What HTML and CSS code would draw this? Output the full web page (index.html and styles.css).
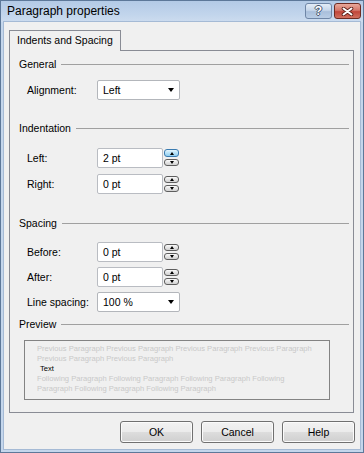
FILE: index.html
```html
<!DOCTYPE html>
<html lang="en">
<head>
    <meta charset="UTF-8">
    <title>Paragraph properties</title>
    <link rel="stylesheet" href="styles.css">
</head>
<body>
<div class="window">
    <div class="titlebar">
        <span class="title">Paragraph properties</span>
        <div class="caption-buttons">
            <span class="caption-btn help-btn">?</span>
            <span class="caption-btn close-btn">
                <svg width="13" height="9" viewBox="0 0 13 9">
                    <path d="M2.5 1.5 L10.5 7.5 M10.5 1.5 L2.5 7.5" stroke="#5a2018" stroke-width="3.6" stroke-linecap="round"/>
                    <path d="M2.5 1.5 L10.5 7.5 M10.5 1.5 L2.5 7.5" stroke="#fff" stroke-width="2" stroke-linecap="round"/>
                </svg>
            </span>
        </div>
    </div>

    <div class="client">
        <div class="tabs">
            <div class="tab active">Indents and Spacing</div>
        </div>

        <div class="tab-page">
            <div class="group-head"><span>General</span><span class="rule"></span></div>
            <div class="row row-alignment">
                <span class="label">Alignment:</span>
                <div class="combo"><span>Left</span><span class="combo-arrow"></span></div>
            </div>

            <div class="group-head head-indent"><span>Indentation</span><span class="rule"></span></div>
            <div class="row row-left">
                <span class="label">Left:</span>
                <div class="textbox">2 pt</div>
                <div class="spin">
                    <span class="spin-btn hover"><span class="tri-up"></span></span>
                    <span class="spin-btn"><span class="tri-down"></span></span>
                </div>
            </div>
            <div class="row row-next">
                <span class="label">Right:</span>
                <div class="textbox">0 pt</div>
                <div class="spin">
                    <span class="spin-btn"><span class="tri-up"></span></span>
                    <span class="spin-btn"><span class="tri-down"></span></span>
                </div>
            </div>

            <div class="group-head head-spacing"><span>Spacing</span><span class="rule"></span></div>
            <div class="row row-before">
                <span class="label">Before:</span>
                <div class="textbox">0 pt</div>
                <div class="spin">
                    <span class="spin-btn"><span class="tri-up"></span></span>
                    <span class="spin-btn"><span class="tri-down"></span></span>
                </div>
            </div>
            <div class="row row-tight">
                <span class="label">After:</span>
                <div class="textbox">0 pt</div>
                <div class="spin">
                    <span class="spin-btn"><span class="tri-up"></span></span>
                    <span class="spin-btn"><span class="tri-down"></span></span>
                </div>
            </div>
            <div class="row row-tight">
                <span class="label">Line spacing:</span>
                <div class="combo"><span>100 %</span><span class="combo-arrow"></span></div>
            </div>

            <div class="group-head head-preview"><span>Preview</span><span class="rule"></span></div>
            <div class="preview">
                <div class="preview-text">
                    <div>Previous Paragraph Previous Paragraph Previous Paragraph Previous Paragraph Previous Paragraph Previous Paragraph</div>
                    <div class="current">Text</div>
                    <div>Following Paragraph Following Paragraph Following Paragraph Following Paragraph Following Paragraph Following Paragraph</div>
                </div>
            </div>
        </div>

        <div class="dialog-buttons">
            <button class="btn">OK</button>
            <button class="btn">Cancel</button>
            <button class="btn">Help</button>
        </div>
    </div>
</div>
</body>
</html>
```

FILE: styles.css
```css
* {
    box-sizing: border-box;
}
body {
    margin: 0;
    font-family: "Liberation Sans", Arial, sans-serif;
    font-size: 10.5px;
    color: #000;
}
.window {
    width: 364px;
    height: 453px;
    border: 1px solid #5d7899;
    background: #c4d6ec;
    display: flex;
    flex-direction: column;
}
.titlebar {
    height: 21px;
    flex: none;
    display: flex;
    justify-content: space-between;
    padding: 0 2px 0 6px;
    background: linear-gradient(#b3cae6, #c2d5ec 65%, #cddcef);
}
.title {
    font-size: 12px;
    line-height: 21px;
}
.caption-buttons {
    display: flex;
    gap: 2px;
    padding-top: 2px;
}
.caption-btn {
    width: 27px;
    height: 16px;
    border-radius: 3px;
    display: flex;
    align-items: center;
    justify-content: center;
}
.help-btn {
    border: 1px solid #6f86a6;
    background: linear-gradient(#e3ecf7, #c6d6ea 45%, #a9bfdb 55%, #b9cde5);
    color: #fff;
    font-weight: bold;
    font-size: 12px;
    text-shadow: 1px 0 #44556d, -1px 0 #44556d, 0 1px #44556d, 0 -1px #44556d;
}
.close-btn {
    border: 1px solid #6e2b22;
    background: linear-gradient(#e9a99a, #d4776a 45%, #c1463a 55%, #d0705f);
}
.client {
    flex: 1;
    margin: 0 3px 3px;
    background: #f0f0f0;
    box-shadow: 0 0 0 1px #a5bad5;
    padding-top: 8px;
}
.tabs {
    display: flex;
    padding-left: 5px;
}
.tab {
    position: relative;
    z-index: 1;
    height: 21px;
    margin-bottom: -1px;
    padding: 0 7px;
    line-height: 19px;
    border: 1px solid #898c95;
    border-bottom: none;
    background: #f0f0f0;
}
.tab-page {
    height: 363px;
    margin: 0 6px 0 5px;
    padding: 6px 4px 0 9px;
    border: 1px solid #898c95;
    background: #f0f0f0;
}
.group-head {
    display: flex;
    align-items: center;
    height: 14px;
    line-height: 14px;
}
.group-head .rule {
    flex: 1;
    height: 1px;
    margin-left: 5px;
    background: #a0a0a0;
}
.head-indent {
    margin-top: 21px;
}
.head-spacing {
    margin-top: 22px;
}
.head-preview {
    margin-top: 5px;
}
.row {
    display: flex;
    align-items: center;
    height: 20px;
    padding-left: 8px;
}
.row-alignment {
    margin-top: 9px;
}
.row-left {
    margin-top: 13px;
}
.row-next {
    margin-top: 6px;
}
.row-before {
    margin-top: 12px;
}
.row-tight {
    margin-top: 5px;
}
.label {
    width: 70px;
}
.textbox {
    width: 66px;
    height: 20px;
    padding-left: 5px;
    line-height: 18px;
    border: 1px solid #b9bcc2;
    border-radius: 2px;
    background: #fff;
}
.combo {
    width: 83px;
    height: 20px;
    display: flex;
    align-items: center;
    justify-content: space-between;
    padding: 0 5px 0 5px;
    border: 1px solid #b3b6bb;
    border-radius: 2px;
    background: #fff;
}
.combo-arrow {
    width: 0;
    height: 0;
    border-left: 3.5px solid transparent;
    border-right: 3.5px solid transparent;
    border-top: 4px solid #000;
}
.spin {
    display: flex;
    flex-direction: column;
    gap: 2px;
    margin-left: 1px;
}
.spin-btn {
    width: 15px;
    height: 7px;
    display: flex;
    align-items: center;
    justify-content: center;
    border: 1px solid #5e5e5e;
    border-radius: 3px;
    background: linear-gradient(#fbfbfb, #e4e4e4 50%, #d2d2d2);
}
.spin-btn.hover {
    height: 8px;
    margin-top: -1px;
    border-color: #3a7bb0;
    background: linear-gradient(#e4f5fd, #b7e2f8 50%, #8fcdef);
}
.tri-up,
.tri-down {
    width: 0;
    height: 0;
    border-left: 2.5px solid transparent;
    border-right: 2.5px solid transparent;
}
.tri-up {
    border-bottom: 3px solid #000;
}
.tri-down {
    border-top: 3px solid #000;
}
.preview {
    width: 306px;
    height: 60px;
    margin: 9px 0 0 5px;
    padding: 3px 0 0 12px;
    border: 1px solid #838383;
    overflow: hidden;
}
.preview-text {
    width: 282px;
    height: 50px;
    overflow: hidden;
    font-size: 7.6px;
    line-height: 10px;
    color: #c9c9c9;
}
.preview-text > div {
    max-height: 20px;
    overflow: hidden;
}
.preview-text .current {
    padding-left: 3px;
    color: #000;
}
.dialog-buttons {
    display: flex;
    justify-content: flex-end;
    gap: 8px;
    margin-top: 8px;
    padding-right: 5px;
}
.btn {
    width: 73px;
    height: 22px;
    padding: 0;
    font-family: "Liberation Sans", Arial, sans-serif;
    font-size: 10.5px;
    color: #000;
    border: 1px solid #707070;
    border-radius: 3px;
    background: linear-gradient(#f2f2f2, #ebebeb 50%, #dddddd 50%, #cfcfcf);
    box-shadow: inset 0 0 0 1px #fbfbfb;
}
```
